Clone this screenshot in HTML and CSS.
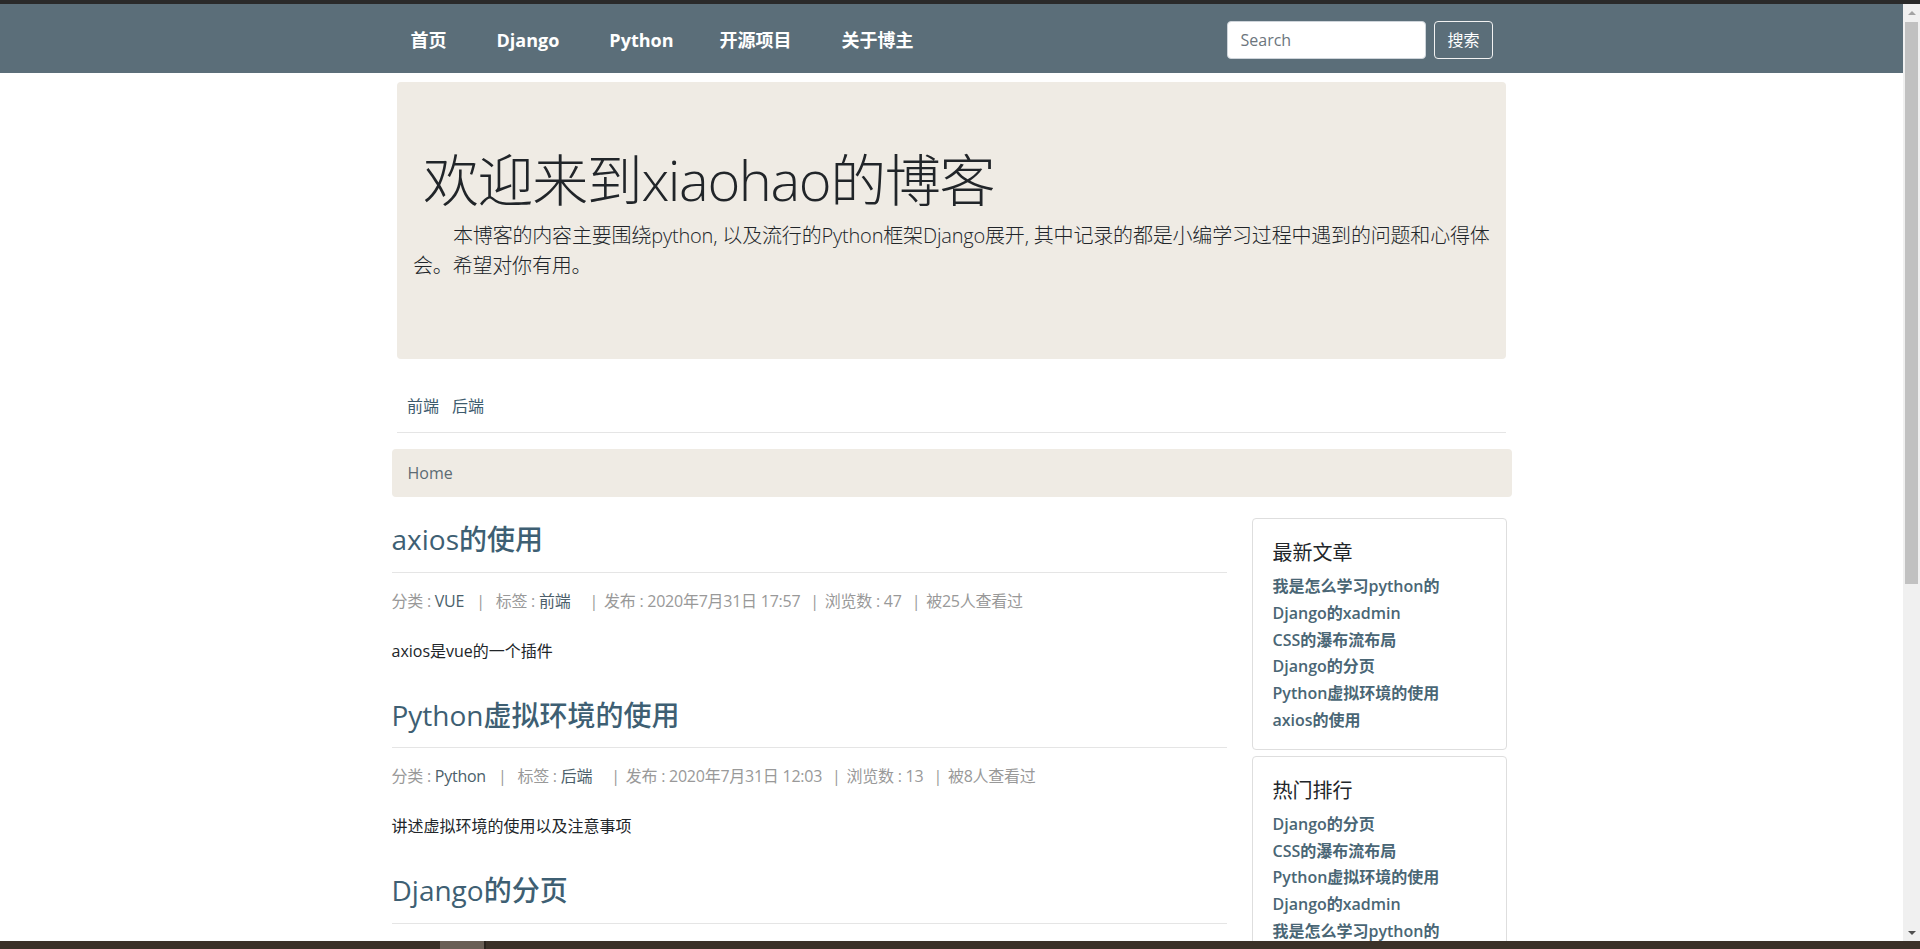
FILE: index.html
```html
<!DOCTYPE html>
<html lang="zh-CN">
<head>
<meta charset="utf-8">
<title>xiaohao的博客</title>
<link rel="stylesheet" href="styles.css">
</head>
<body>
<div class="titlebar"></div>
<div class="window">
  <div class="page">
    <nav class="navbar">
      <div class="navbar-inner">
        <div class="nav-links">
          <a href="#">首页</a>
          <a href="#">Django</a>
          <a href="#">Python</a>
          <a href="#">开源项目</a>
          <a href="#">关于博主</a>
        </div>
        <form class="search">
          <input type="text" placeholder="Search">
          <button type="button">搜索</button>
        </form>
      </div>
    </nav>

    <div class="container">
      <div class="jumbotron">
        <h1>欢迎来到xiaohao的博客</h1>
        <p>本博客的内容主要围绕python, 以及流行的Python框架Django展开, 其中记录的都是小编学习过程中遇到的问题和心得体会。希望对你有用。</p>
      </div>
      <div class="cats">
        <a href="#">前端</a>
        <a href="#">后端</a>
      </div>
      <hr class="rule">
    </div>

    <div class="main">
      <div class="breadcrumb">Home</div>
      <div class="row">
        <div class="posts">
          <article class="post">
            <h3 class="post-title"><a href="#">axios的使用</a></h3>
            <hr class="rule">
            <div class="meta"><span>分类 : <a href="#">VUE</a></span><span class="sep sep-first">|</span><span>标签 : <a href="#">前端</a></span><span class="sep sep-tag">|</span><span>发布 : 2020年7月31日 17:57</span><span class="sep">|</span><span>浏览数 : 47</span><span class="sep">|</span><span>被25人查看过</span></div>
            <p class="excerpt">axios是vue的一个插件</p>
          </article>
          <article class="post">
            <h3 class="post-title"><a href="#">Python虚拟环境的使用</a></h3>
            <hr class="rule">
            <div class="meta"><span>分类 : <a href="#">Python</a></span><span class="sep sep-first">|</span><span>标签 : <a href="#">后端</a></span><span class="sep sep-tag">|</span><span>发布 : 2020年7月31日 12:03</span><span class="sep">|</span><span>浏览数 : 13</span><span class="sep">|</span><span>被8人查看过</span></div>
            <p class="excerpt">讲述虚拟环境的使用以及注意事项</p>
          </article>
          <article class="post">
            <h3 class="post-title"><a href="#">Django的分页</a></h3>
            <hr class="rule">
          </article>
        </div>
        <aside class="sidebar">
          <div class="card">
            <h4>最新文章</h4>
            <a href="#">我是怎么学习python的</a>
            <a href="#">Django的xadmin</a>
            <a href="#">CSS的瀑布流布局</a>
            <a href="#">Django的分页</a>
            <a href="#">Python虚拟环境的使用</a>
            <a href="#">axios的使用</a>
          </div>
          <div class="card">
            <h4>热门排行</h4>
            <a href="#">Django的分页</a>
            <a href="#">CSS的瀑布流布局</a>
            <a href="#">Python虚拟环境的使用</a>
            <a href="#">Django的xadmin</a>
            <a href="#">我是怎么学习python的</a>
          </div>
        </aside>
      </div>
    </div>
  </div>
  <div class="scrollbar">
    <div class="sb-btn"><span class="tri-up"></span></div>
    <div class="sb-track"><div class="sb-thumb"></div></div>
    <div class="sb-btn"><span class="tri-down"></span></div>
  </div>
</div>
<div class="taskbar"><span class="task-item"></span></div>
</body>
</html>
```
FILE: styles.css
```css
html, body {
  margin: 0;
  padding: 0;
  height: 100%;
}
body {
  height: 100vh;
  display: grid;
  grid-template-rows: 4px 1fr 8px;
  overflow: hidden;
  font-family: "Open Sans", "Noto Sans CJK SC", sans-serif;
  font-size: 16px;
  line-height: 1.5;
  color: #212529;
  background: #fff;
}
a { text-decoration: none; }

.titlebar { background: #2a2a2a; }

.window {
  display: grid;
  grid-template-columns: 1fr 17px;
  overflow: hidden;
  min-height: 0;
}
.page {
  overflow: hidden;
  min-width: 0;
}

/* navbar */
.navbar {
  height: 69px;
  background: #5b6e79;
  display: flex;
  align-items: center;
}
.navbar-inner {
  width: 1082px;
  margin: 0 auto;
  display: flex;
  align-items: center;
  justify-content: space-between;
}
.nav-links {
  display: flex;
  gap: 50px;
  padding-top: 3px;
}
.nav-links a {
  color: #fff;
  font-weight: 700;
  font-size: 18px;
  line-height: 27px;
}
.nav-links a:nth-child(3) { margin-right: -4px; }
.search {
  display: flex;
  gap: 8px;
  margin: 0;
  padding-top: 2px;
}
.search input {
  box-sizing: border-box;
  width: 199px;
  height: 38px;
  padding: 6px 12px;
  border: 1px solid #ced4da;
  border-radius: 4px;
  font-family: inherit;
  font-size: 16px;
  color: #495057;
  background: #fff;
  outline: none;
}
.search input::placeholder { color: #6c757d; }
.search button {
  box-sizing: border-box;
  height: 38px;
  padding: 6px 12px;
  border: 1px solid #f2f2f2;
  border-radius: 4px;
  background: transparent;
  color: #fff;
  font-family: inherit;
  font-size: 16px;
  line-height: 24px;
}

/* top container */
.container {
  width: 1109px;
  margin: 9px auto 0;
}
.jumbotron {
  box-sizing: border-box;
  height: 277px;
  padding: 64px 16px 0;
  background: #efebe4;
  border-radius: 4px;
}
.jumbotron h1 {
  margin: 0 0 8px;
  padding-left: 10px;
  font-size: 56px;
  font-weight: 300;
  line-height: 1.2;
  letter-spacing: -1.4px;
  color: #212529;
}
.jumbotron p {
  margin: 0 -22px 0 0;
  font-size: 20px;
  font-weight: 300;
  line-height: 30px;
  text-indent: 40px;
  letter-spacing: -0.18px;
  color: #212529;
}
.cats {
  padding: 35px 10px 0;
  display: flex;
  gap: 13px;
  line-height: 24px;
}
.cats a { color: #3d5b6d; }

.rule {
  margin: 0;
  border: 0;
  border-top: 1px solid #e5e5e5;
  height: 0;
}
.container .rule { margin-top: 14px; }

/* main */
.main {
  width: 1120px;
  margin: 16px auto 0;
}
.breadcrumb {
  padding: 12px 16px;
  line-height: 24px;
  background: #efebe4;
  border-radius: 4px;
  color: #5c6b74;
}
.row {
  display: grid;
  grid-template-columns: 835px 255px;
  column-gap: 25px;
  margin-top: 21px;
  align-items: start;
}
.posts { padding-top: 5px; }
.post-title {
  margin: 0 0 15px;
  font-size: 28px;
  font-weight: 500;
  line-height: 1.2;
}
.post-title a { color: #3e5f73; }
.post .rule { margin-bottom: 16px; }
.meta {
  color: #999;
  line-height: 24px;
  margin-bottom: 26px;
  white-space: nowrap;
  letter-spacing: -0.25px;
}
.meta a { color: #4c5f6b; }
.sep { margin: 0 6px 0 10px; }
.sep-first { margin-left: 12px; margin-right: 11px; }
.sep-tag { margin-left: 19px; }
.excerpt {
  margin: 0 0 36px;
  line-height: 24px;
  color: #212529;
}

/* sidebar */
.card {
  border: 1px solid #dedede;
  border-radius: 4px;
  padding: 19px 20px 15px;
  margin-bottom: 6px;
}
.card h4 {
  margin: 0 0 5px;
  font-size: 20px;
  font-weight: 400;
  line-height: 30px;
  color: #212529;
}
.card a {
  display: block;
  font-size: 16px;
  font-weight: 600;
  line-height: 26.8px;
  color: #4a6675;
  white-space: nowrap;
}

/* scrollbar */
.scrollbar {
  background: #f0f0f0;
  display: grid;
  grid-template-rows: 17px 1fr 17px;
}
.sb-btn {
  display: flex;
  align-items: center;
  justify-content: center;
}
.tri-up, .tri-down {
  width: 0;
  height: 0;
  border-left: 4px solid transparent;
  border-right: 4px solid transparent;
}
.tri-up { border-bottom: 4px solid #a3a3a3; }
.tri-down { border-top: 4px solid #505050; }
.sb-track { padding: 1px 2px; }
.sb-thumb {
  height: 562px;
  background: #c1c1c1;
}

/* taskbar */
.taskbar {
  background: #3b3128;
  display: flex;
  padding-left: 440px;
}
.task-item {
  width: 44px;
  background: #6a5f56;
  border-right: 2px solid #2a231d;
}
```
